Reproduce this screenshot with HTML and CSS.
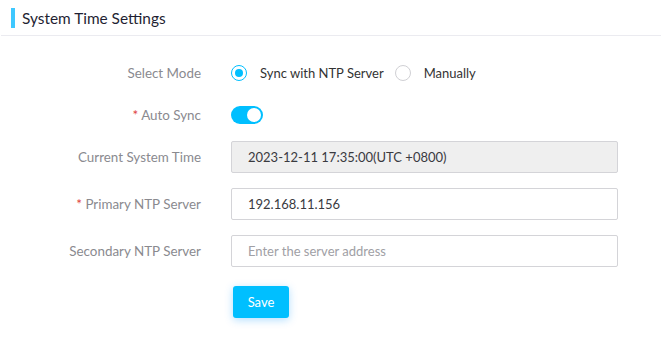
FILE: index.html
```html
<!DOCTYPE html>
<html lang="en">
<head>
    <meta charset="UTF-8">
    <meta name="viewport" content="width=device-width, initial-scale=1.0">
    <title>System Time Settings</title>
    <link rel="stylesheet" href="styles.css">
</head>
<body>
    <div class="panel">
        <div class="panel-header">
            <span class="title-bar"></span>
            <h2>System Time Settings</h2>
        </div>

        <form class="form">
            <div class="form-row row-mode">
                <label class="form-label">Select Mode</label>
                <div class="form-field">
                    <label class="radio checked"><span class="radio-dot"></span>Sync with NTP Server</label>
                    <label class="radio"><span class="radio-dot"></span>Manually</label>
                </div>
            </div>

            <div class="form-row row-sync">
                <label class="form-label"><span class="req">*</span> Auto Sync</label>
                <div class="form-field">
                    <span class="switch on"><span class="knob"></span></span>
                </div>
            </div>

            <div class="form-row">
                <label class="form-label">Current System Time</label>
                <div class="form-field">
                    <div class="input disabled">2023-12-11 17:35:00(UTC +0800)</div>
                </div>
            </div>

            <div class="form-row">
                <label class="form-label"><span class="req">*</span> Primary NTP Server</label>
                <div class="form-field">
                    <div class="input">192.168.11.156</div>
                </div>
            </div>

            <div class="form-row row-last">
                <label class="form-label">Secondary NTP Server</label>
                <div class="form-field">
                    <div class="input placeholder">Enter the server address</div>
                </div>
            </div>

            <div class="form-row row-actions">
                <span class="form-label"></span>
                <div class="form-field">
                    <button type="button" class="btn-primary">Save</button>
                </div>
            </div>
        </form>
    </div>
</body>
</html>
```

FILE: styles.css
```css
body {
    margin: 0;
    background: #fff;
    font-family: Lato, "Open Sans", Arial, sans-serif;
    color: #333;
}
.panel {
    padding: 1px 3px 0 1px;
}
.panel-header {
    display: flex;
    align-items: center;
    height: 34px;
    padding-left: 10px;
    border-bottom: 1px solid #ebebf0;
}
.title-bar {
    width: 4px;
    height: 20px;
    background: #3ec8ff;
    margin-right: 7px;
}
.panel-header h2 {
    margin: 0;
    font-size: 15.4px;
    font-weight: normal;
    color: #1f1f33;
}
.form {
    padding-top: 21px;
}
.form-row {
    display: flex;
    align-items: center;
    height: 32px;
    margin-bottom: 15px;
}
.row-mode {
    margin-bottom: 10px;
}
.row-sync {
    margin-bottom: 10px;
}
.row-last {
    margin-bottom: 19px;
}
.form-label {
    width: 200px;
    text-align: right;
    font-size: 13.4px;
    color: #8a8a8f;
    flex-shrink: 0;
}
.req {
    color: #e0443e;
}
.form-field {
    margin-left: 30px;
    display: flex;
    align-items: center;
}
.radio {
    display: flex;
    align-items: center;
    font-size: 13px;
    color: #333;
    margin-right: 11px;
}
.radio-dot {
    width: 14px;
    height: 14px;
    border: 1px solid #d0d0d4;
    border-radius: 50%;
    margin-right: 13px;
    display: inline-flex;
    align-items: center;
    justify-content: center;
}
.radio.checked .radio-dot {
    border-color: #00bfff;
}
.radio.checked .radio-dot::after {
    content: "";
    width: 8px;
    height: 8px;
    border-radius: 50%;
    background: #00bfff;
}
.switch {
    position: relative;
    width: 32px;
    height: 18px;
    border-radius: 9px;
    background: #d0d0d4;
    display: inline-block;
}
.switch.on {
    background: #00bfff;
}
.knob {
    position: absolute;
    top: 2px;
    left: 2px;
    width: 14px;
    height: 14px;
    border-radius: 50%;
    background: #fff;
}
.switch.on .knob {
    left: 16px;
}
.input {
    box-sizing: border-box;
    width: 387px;
    height: 32px;
    border: 1px solid #d4d4d8;
    border-radius: 2px;
    padding: 0 16px;
    display: flex;
    align-items: center;
    font-size: 13px;
    color: #3a3a3f;
    background: #fff;
}
.input.disabled {
    background: #efefef;
}
.input.placeholder {
    color: #a0a0a5;
}
.btn-primary {
    margin-left: 2px;
    width: 56px;
    height: 32px;
    border: none;
    border-radius: 3px;
    background: #00bfff;
    color: #fff;
    font-family: inherit;
    font-size: 13px;
    box-shadow: 0 2px 8px rgba(0, 150, 255, 0.3);
}
```
